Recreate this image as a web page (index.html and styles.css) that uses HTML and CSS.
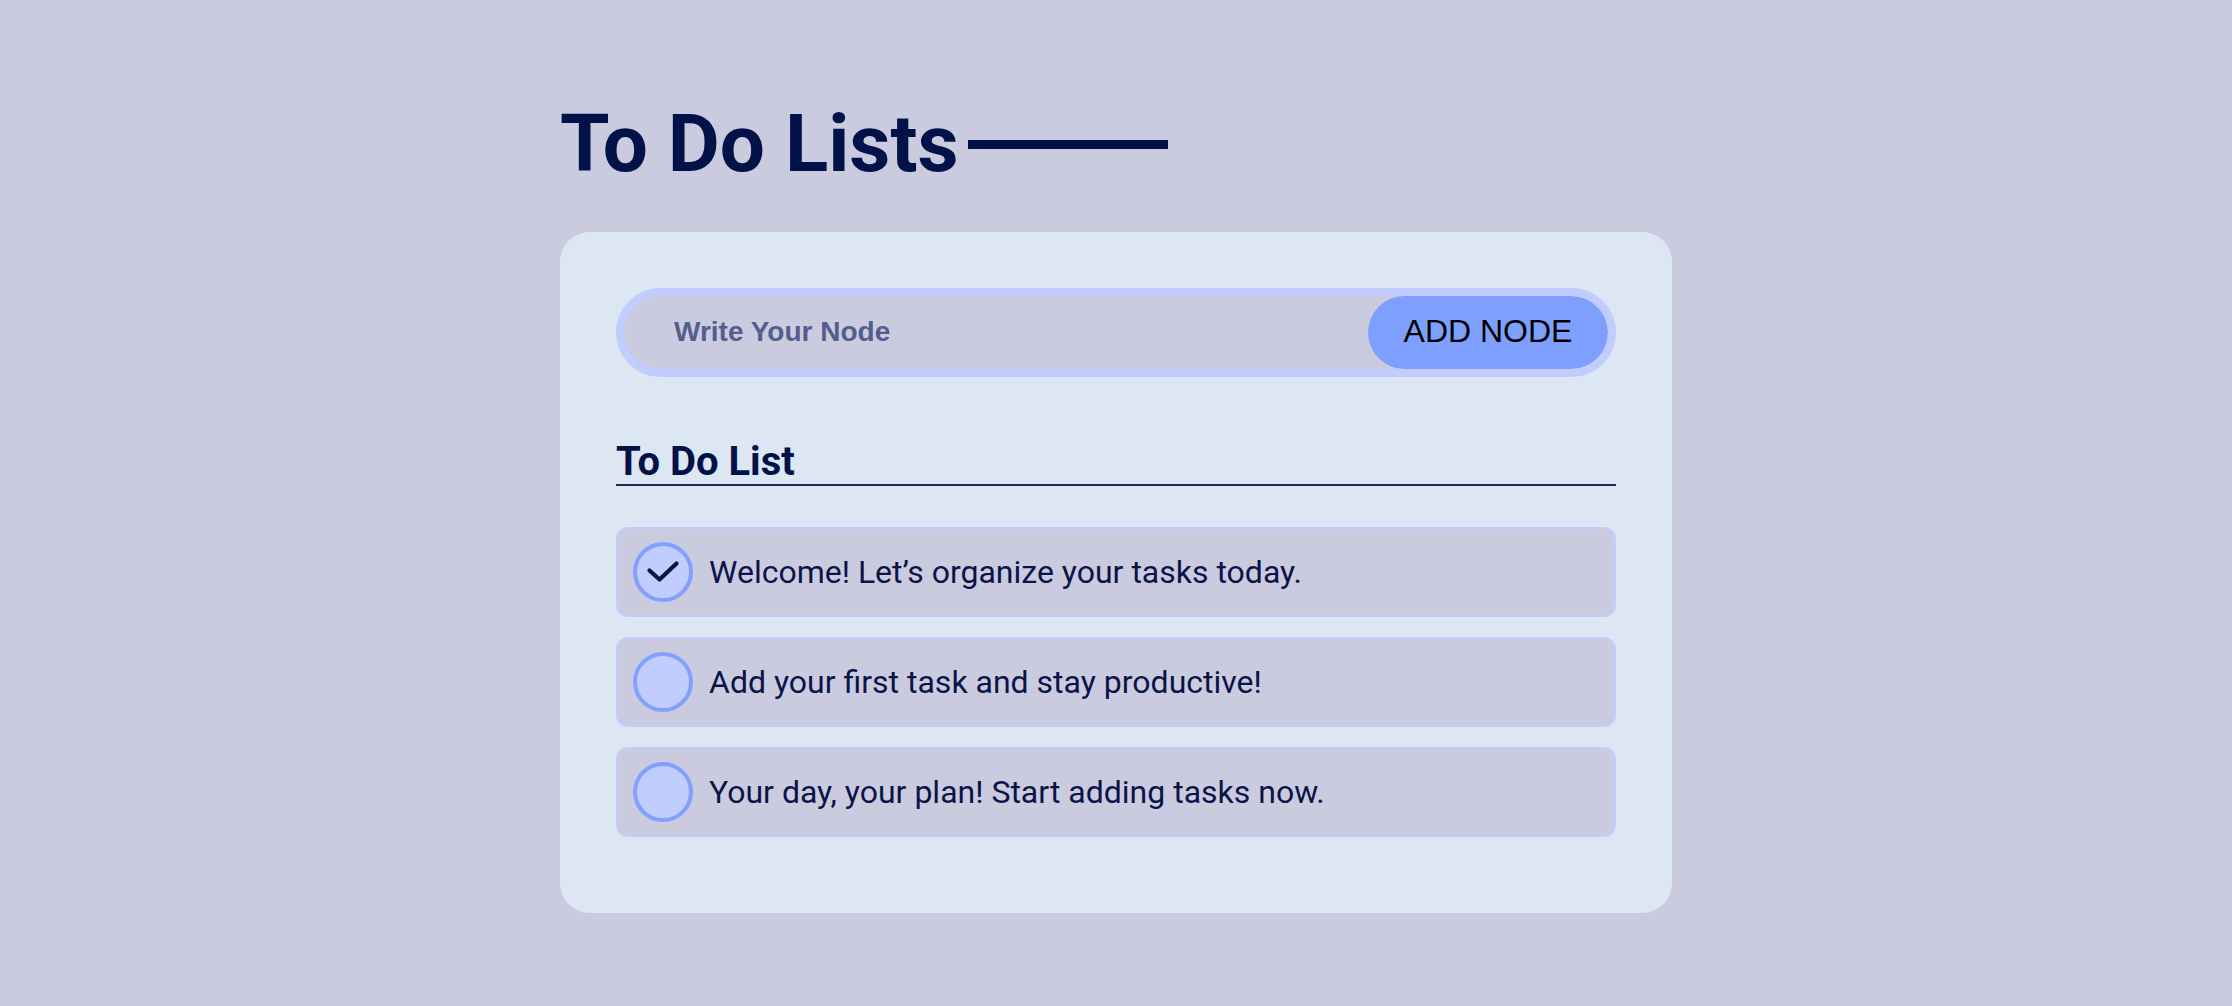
FILE: index.html
```html
<!DOCTYPE html>
<html lang="en">
<head>
<meta charset="utf-8">
<title>To Do Lists</title>
<link rel="stylesheet" href="styles.css">
</head>
<body>
<main class="page">
  <h1 class="title">To Do Lists</h1>
  <section class="card">
    <form class="adder">
      <input class="adder-input" type="text" placeholder="Write Your Node">
      <button class="adder-btn" type="button">ADD NODE</button>
    </form>
    <h2 class="list-title">To Do List</h2>
    <ul class="list">
      <li class="item">
        <span class="check checked">
          <svg viewBox="0 0 52 52" width="52" height="52"><path d="M12.5 24.5 L22.5 33.5 L39.5 17.5" fill="none" stroke="#0b1448" stroke-width="4.2" stroke-linecap="round" stroke-linejoin="round"/></svg>
        </span>
        <span class="item-text">Welcome! Let’s organize your tasks today.</span>
      </li>
      <li class="item">
        <span class="check"></span>
        <span class="item-text">Add your first task and stay productive!</span>
      </li>
      <li class="item">
        <span class="check"></span>
        <span class="item-text">Your day, your plan! Start adding tasks now.</span>
      </li>
    </ul>
  </section>
</main>
</body>
</html>
```

FILE: styles.css
```css
* { box-sizing: border-box; }

html, body {
  margin: 0;
  padding: 0;
  background: #cbcbe0;
}

body {
  font-family: Roboto, "Liberation Sans", sans-serif;
  color: #001247;
}

.page {
  width: 1112px;
  margin: 0 auto;
  padding-top: 97px;
  padding-bottom: 60px;
}

.title {
  display: flex;
  align-items: center;
  gap: 9px;
  margin: 0 0 41px 0;
  font-size: 80px;
  font-weight: 700;
  line-height: normal;
  color: #001247;
}

.title::after {
  content: "";
  display: block;
  width: 200px;
  height: 9px;
  background: #001247;
}

.card {
  background: #dde6f3;
  border-radius: 30px;
  padding: 56px;
}

.adder {
  display: flex;
  align-items: stretch;
  width: 1000px;
  height: 89px;
  margin: 0;
  border: 8px solid #c0cdfe;
  border-radius: 45px;
  background: #cbcbe0;
  overflow: hidden;
}

.adder-input {
  flex: 1;
  min-width: 0;
  border: none;
  outline: none;
  background: transparent;
  padding: 0 0 2px 50px;
  font-family: "Liberation Sans", Arial, sans-serif;
  font-size: 28px;
  font-weight: 700;
  color: #535d8e;
}

.adder-input::placeholder {
  color: #535d8e;
  opacity: 1;
}

.adder-btn {
  width: 240px;
  border: none;
  border-radius: 37px;
  background: #7f9fff;
  color: #000;
  font-family: "Liberation Sans", Arial, sans-serif;
  font-size: 32px;
  font-weight: 400;
  padding: 0 0 2px 0;
  cursor: pointer;
}

.list-title {
  margin: 65px 0 0 0;
  font-size: 40px;
  font-weight: 700;
  line-height: 40px;
  color: #001247;
  padding-bottom: 2px;
  border-bottom: 2px solid #1f2a55;
}

.list {
  list-style: none;
  margin: 41px 0 0 0;
  padding: 0;
  display: flex;
  flex-direction: column;
}

.item {
  display: flex;
  align-items: center;
  gap: 16px;
  height: 90px;
  margin-bottom: 20px;
  padding: 0 15px;
  border: 2px solid #c0cdfe;
  border-radius: 12px;
  background: #cbcbe0;
}

.check {
  flex: none;
  width: 60px;
  height: 60px;
  border: 4px solid #83a0ff;
  border-radius: 50%;
  background: #c0cdfe;
  display: flex;
}

.check svg {
  display: block;
}

.item-text {
  font-size: 32px;
  font-weight: 400;
  color: #0b1448;
  line-height: normal;
}
```
